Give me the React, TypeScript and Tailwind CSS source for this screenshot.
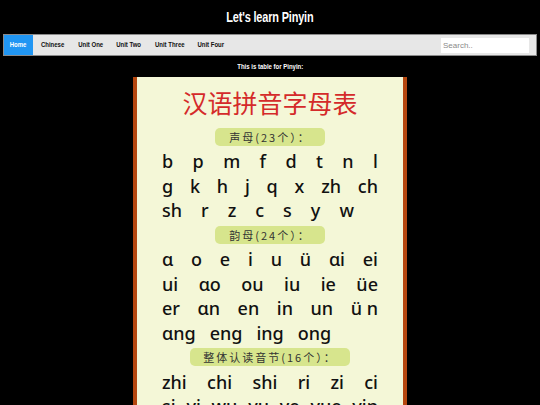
import React from 'react';

const navItems = [
    { label: 'Home', w: 'w-[29px]' },
    { label: 'Chinese', w: 'w-[39px]' },
    { label: 'Unit One', w: 'w-[38px]' },
    { label: 'Unit Two', w: 'w-[38px]' },
    { label: 'Unit Three', w: 'w-[43px]' },
    { label: 'Unit Four', w: 'w-[39px]' },
];

const heavy = "font-['Liberation_Sans','Arial',sans-serif] font-bold";
const letterFont = "font-['Noto_Sans','DejaVu_Sans',sans-serif] text-[18px] font-medium text-[#111] leading-none";
const cjk = "font-['Noto_Sans_CJK_SC',sans-serif]";

const Pill = ({ children, wide }: { children: React.ReactNode; wide?: boolean }) => (
    <div className="h-[24.5px] flex items-center justify-center">
        <div
            className={
                (wide ? 'w-[160px] ' : 'w-[110px] ') +
                `h-[18px] rounded-[5px] bg-[#d7e58d] flex items-center justify-center text-[11px] tracking-[2px] text-[#333] ${cjk}`
            }
        >
            {children}
        </div>
    </div>
);

const Row = ({ items, full = true, gap = '' }: { items: string[]; full?: boolean; gap?: string }) => (
    <div className={`h-[24.5px] flex items-center ${full ? 'justify-between' : gap} ${letterFont}`}>
        {items.map((t, i) => (
            <span key={i}>{t}</span>
        ))}
    </div>
);

export default function App() {
    return (
        <div className="min-h-screen bg-black overflow-hidden">
            {/* Title */}
            <div className="h-[34px] flex items-center justify-center">
                <span className={`inline-block scale-x-[0.78] text-white text-[14px] tracking-[-0.2px] ${heavy}`}>
                    Let's learn Pinyin
                </span>
            </div>

            {/* Nav bar */}
            <div className="mx-[3px] h-[22px] bg-[#e7e7e7] border border-[#8a8a8a] flex items-stretch">
                {navItems.map((item, i) => (
                    <div
                        key={item.label}
                        className={
                            (i === 0 ? 'bg-[#2196f3] text-white ' : 'text-[#111] ') +
                            `${item.w} flex items-center justify-center`
                        }
                    >
                        <span className={`inline-block whitespace-nowrap scale-x-[0.75] text-[8px] ${heavy}`}>{item.label}</span>
                    </div>
                ))}
                <div className="ml-auto flex items-center pr-[7px]">
                    <input
                        placeholder="Search.."
                        className="w-[88px] h-[15px] bg-white px-[2px] text-[8px] font-['Liberation_Sans',sans-serif] placeholder:text-[#8a8a8a] outline-none"
                    />
                </div>
            </div>

            {/* Caption */}
            <div className="h-[21px] flex items-center justify-center">
                <span className={`inline-block scale-x-[0.8] text-white text-[7.5px] ${heavy}`}>
                    This is table for Pinyin:
                </span>
            </div>

            {/* Pinyin table picture */}
            <div className="mx-auto w-[274px] border-x-[4px] border-[#b5470f] bg-[#f4f7d7] px-[25px] pt-[4px] pb-6">
                <div className={`h-[43.5px] flex items-center justify-center text-[25px] text-[#d42a2a] ${cjk}`}>
                    汉语拼音字母表
                </div>
                <Pill>声母(23个）：</Pill>
                <Row items={['b', 'p', 'm', 'f', 'd', 't', 'n', 'l']} />
                <Row items={['g', 'k', 'h', 'j', 'q', 'x', 'zh', 'ch']} />
                <Row items={['sh', 'r', 'z', 'c', 's', 'y', 'w']} full={false} gap="gap-x-[19px]" />
                <Pill>韵母(24个）：</Pill>
                <Row items={['ɑ', 'o', 'e', 'i', 'u', 'ü', 'ɑi', 'ei']} />
                <Row items={['ui', 'ɑo', 'ou', 'iu', 'ie', 'üe']} />
                <Row items={['er', 'ɑn', 'en', 'in', 'un', 'ü n']} />
                <Row items={['ɑng', 'eng', 'ing', 'ong']} full={false} gap="gap-x-[14px]" />
                <Pill wide>整体认读音节(16个）：</Pill>
                <Row items={['zhi', 'chi', 'shi', 'ri', 'zi', 'ci']} />
                <Row items={['si', 'yi', 'wu', 'yu', 'ye', 'yue', 'yin']} />
            </div>
        </div>
    );
}
